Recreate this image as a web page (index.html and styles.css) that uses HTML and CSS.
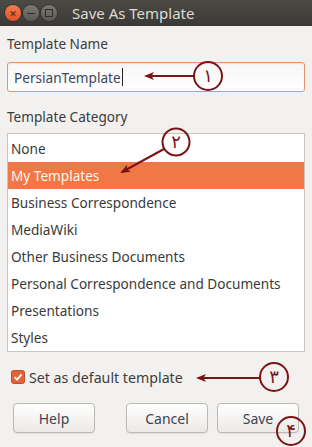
FILE: index.html
```html
<!DOCTYPE html>
<html lang="en">

<head>
    <meta charset="UTF-8">
    <meta name="viewport" content="width=device-width, initial-scale=1.0">
    <title>Save As Template</title>

    <link rel="stylesheet" href="styles.css">
</head>

<body>

    <div class="window">
        <div class="titlebar">
            <span class="wbtn close">&#x2715;</span>
            <span class="wbtn mini"><i class="bar"></i></span>
            <span class="wbtn maxi"><i class="sq"></i></span>
            <span class="title">Save As Template</span>
        </div>

        <div class="content">
            <div class="label">Template Name</div>
            <div class="entry">PersianTemplate<span class="caret"></span></div>

            <div class="label cat">Template Category</div>
            <ul class="list">
                <li>None</li>
                <li class="sel">My Templates</li>
                <li>Business Correspondence</li>
                <li>MediaWiki</li>
                <li>Other Business Documents</li>
                <li>Personal Correspondence and Documents</li>
                <li>Presentations</li>
                <li>Styles</li>
            </ul>

            <label class="check">
                <span class="box">
                    <svg width="12" height="12" viewBox="0 0 12 12">
                        <path d="M2.6 6.2 L5 8.6 L9.6 3.4" fill="none" stroke="#fff" stroke-width="1.8" />
                    </svg>
                </span>
                Set as default template
            </label>

            <div class="buttons">
                <button>Help</button>
                <div class="right">
                    <button>Cancel</button>
                    <button>Save</button>
                </div>
            </div>
        </div>

        <!-- annotations drawn over the dialog -->
        <svg class="notes" width="312" height="447" viewBox="0 0 312 447">
            <defs>
                <marker id="head" markerUnits="userSpaceOnUse" markerWidth="10" markerHeight="8" refX="8" refY="4" orient="auto">
                    <path d="M10 4 L0 0 L2.5 4 L0 8 Z" fill="#7b1414" />
                </marker>
            </defs>
            <g stroke="#7b1414" stroke-width="2" fill="none">
                <line x1="194" y1="76" x2="146" y2="76" marker-end="url(#head)" />
                <circle cx="208" cy="76" r="14" />

                <line x1="164" y1="149" x2="122" y2="172" marker-end="url(#head)" />
                <circle cx="176" cy="142" r="13.5" />

                <line x1="260" y1="378" x2="198" y2="378" marker-end="url(#head)" />
                <circle cx="274" cy="377" r="14" />

                <circle cx="291" cy="431" r="14" />
            </g>
            <g class="num" fill="#7b1414">
                <text x="208" y="82">۱</text>
                <text x="176" y="148">۲</text>
                <text x="274" y="383">۳</text>
                <text x="291" y="437">۴</text>
            </g>
        </svg>
    </div>

</body>

</html>
```

FILE: styles.css
```css
body {
    margin: 0;
    font-family: "Noto Sans", "DejaVu Sans", sans-serif;
    background: #f2f1f0;
}

.window {
    position: relative;
    width: 312px;
    height: 447px;
    overflow: hidden;
    background: #f2f1f0;
    color: #3c3c3c;
    font-size: 13.6px;
}

.titlebar {
    height: 26px;
    display: flex;
    align-items: center;
    padding-left: 5px;
    gap: 2px;
    background: linear-gradient(#4c4a45, #3a3935);
}

.wbtn {
    width: 16px;
    height: 16px;
    border-radius: 50%;
    display: flex;
    align-items: center;
    justify-content: center;
    background: linear-gradient(#7a7873, #5c5a56);
    box-shadow: 0 0 0 1px #35342f;
    color: #3a2a26;
    font-size: 9px;
}

.close {
    background: linear-gradient(#f47a50, #e0532a);
    color: #4a1e10;
}

.bar {
    width: 8px;
    height: 1px;
    background: #2f2e2b;
}

.sq {
    width: 6px;
    height: 6px;
    border: 1px solid #2f2e2b;
}

.title {
    margin-left: 13px;
    color: #dfdbd2;
    font-size: 15px;
}

.content {
    padding: 8px 7px 0 7px;
}

.label {
    line-height: 20px;
}

.cat {
    margin-top: 15px;
}

.entry {
    margin-top: 8px;
    height: 30px;
    box-sizing: border-box;
    border: 1px solid #e8916d;
    border-radius: 3px;
    background: linear-gradient(#f7f6f5, #ffffff);
    box-shadow: inset 0 1px 1px rgba(0, 0, 0, .06);
    padding-left: 6px;
    display: flex;
    align-items: center;
    color: #3c4660;
}

.caret {
    width: 1px;
    height: 18px;
    background: #222;
    margin-left: 1px;
}

.list {
    list-style: none;
    margin: 6px 0 0 0;
    padding: 1px 0 0 0;
    height: 219px;
    box-sizing: border-box;
    border: 1px solid #c9c6c2;
    background: #fff;
}

.list li {
    height: 27px;
    line-height: 27px;
    padding-left: 3px;
    color: #3a3a3a;
}

.list .sel {
    background: #f07746;
    color: #fff4ee;
}

.check {
    margin-top: 15px;
    height: 20px;
    display: flex;
    align-items: center;
    padding-left: 5px;
    gap: 5px;
    font-size: 14.2px;
}

.box {
    width: 12px;
    height: 12px;
    border-radius: 2px;
    background: #e2653a;
    box-shadow: 0 0 0 1px #c4532d;
    display: flex;
    align-items: center;
    justify-content: center;
}

.buttons {
    margin-top: 16px;
    display: flex;
    justify-content: space-between;
    padding: 0 6px 0 6px;
}

.right {
    display: flex;
    gap: 9px;
}

button {
    width: 82px;
    height: 30px;
    border: 1px solid #bdb8b1;
    border-radius: 4px;
    background: linear-gradient(#ffffff, #ebe9e7);
    box-shadow: 0 1px 1px rgba(0, 0, 0, .08);
    font-family: inherit;
    font-size: 14px;
    color: #3c4450;
}

.notes {
    position: absolute;
    left: 0;
    top: 0;
    pointer-events: none;
}

.num text {
    font-family: "DejaVu Sans", sans-serif;
    font-size: 18px;
    text-anchor: middle;
}
```
